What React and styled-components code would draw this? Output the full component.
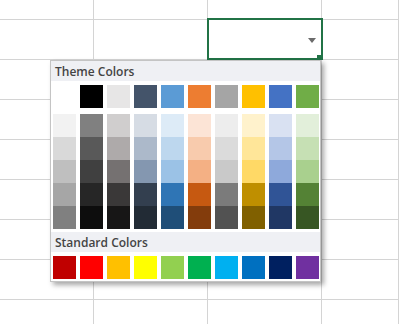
import React from "react";
import styled, { createGlobalStyle } from "styled-components";

const Global = createGlobalStyle`
  html, body { margin: 0; padding: 0; background: #ffffff; }
  body { font-family: "Open Sans", "Noto Sans", sans-serif; }
  * { box-sizing: border-box; }
`;

const Sheet = styled.div`
  position: relative;
  width: 399px;
  height: 324px;
  overflow: hidden;
`;

const Grid = styled.div`
  display: grid;
  grid-template-columns: 94px 114px 114px 1fr;
  grid-template-rows: 20px repeat(8, 40px);
`;

const Cell = styled.div`
  border-right: 1px solid #d4d4d4;
  border-bottom: 1px solid #d4d4d4;
`;

const Selection = styled.div`
  position: absolute;
  left: 207px;
  top: 18px;
  width: 116px;
  height: 42px;
  border: 2px solid #217346;
  display: flex;
  align-items: center;
  justify-content: flex-end;
  padding: 2px 5px 0 0;
`;

const FillHandle = styled.div`
  position: absolute;
  right: -1px;
  bottom: -2px;
  width: 5px;
  height: 5px;
  background: #217346;
`;

const Popup = styled.div`
  position: absolute;
  left: 50px;
  top: 60px;
  width: 271px;
  background: #ffffff;
  border: 1px solid #c4c4c4;
  box-shadow: 3px 3px 5px rgba(0, 0, 0, 0.35);
  padding-bottom: 2px;
`;

const SectionHeader = styled.div`
  height: 20px;
  background: #eff0f4;
  display: flex;
  align-items: center;
  padding-left: 4px;
  font-size: 12px;
  font-weight: 600;
  color: #444444;
  margin-top: ${(p) => p.$top || 0}px;
`;

const SwatchRow = styled.div`
  display: grid;
  grid-template-columns: repeat(10, 23px);
  column-gap: 4px;
  padding-left: 2px;
  margin-top: ${(p) => p.$top || 0}px;
`;

const Swatch = styled.div`
  width: 23px;
  height: 23px;
  background: ${(p) => p.$c};
`;

const ShadeColumn = styled.div`
  display: flex;
  flex-direction: column;
`;

const theme = ["#ffffff", "#000000", "#e7e6e6", "#44546a", "#5b9bd5", "#ed7d31", "#a5a5a5", "#ffc000", "#4472c4", "#70ad47"];

const shades = [
  ["#f2f2f2", "#d9d9d9", "#bfbfbf", "#a6a6a6", "#808080"],
  ["#808080", "#595959", "#404040", "#262626", "#0d0d0d"],
  ["#d0cece", "#aeaaaa", "#757171", "#3a3838", "#171616"],
  ["#d6dce4", "#acb9ca", "#8497b0", "#333f4f", "#222b35"],
  ["#ddebf7", "#bdd7ee", "#9bc2e6", "#2f75b5", "#1f4e78"],
  ["#fce4d6", "#f8cbad", "#f4b084", "#c65911", "#833c0c"],
  ["#ededed", "#dbdbdb", "#c9c9c9", "#7b7b7b", "#525252"],
  ["#fff2cc", "#ffe699", "#ffd966", "#bf8f00", "#806000"],
  ["#d9e1f2", "#b4c6e7", "#8ea9db", "#305496", "#203764"],
  ["#e2efda", "#c6e0b4", "#a9d08e", "#548235", "#375623"],
];

const standard = ["#c00000", "#ff0000", "#ffc000", "#ffff00", "#92d050", "#00b050", "#00b0f0", "#0070c0", "#002060", "#7030a0"];

export default function App() {
  return (
    <>
      <Global />
      <Sheet>
        <Grid>
          {Array.from({ length: 36 }).map((_, i) => (
            <Cell key={i} />
          ))}
        </Grid>
        <Selection>
          <svg width="8" height="5" viewBox="0 0 8 5">
            <polygon points="0,0 8,0 4,5" fill="#6b6b6b" />
          </svg>
          <FillHandle />
        </Selection>
        <Popup>
          <SectionHeader>Theme Colors</SectionHeader>
          <SwatchRow $top={4}>
            {theme.map((c, i) => (
              <Swatch key={i} $c={c} />
            ))}
          </SwatchRow>
          <SwatchRow $top={6}>
            {shades.map((col, i) => (
              <ShadeColumn key={i}>
                {col.map((c, j) => (
                  <Swatch key={j} $c={c} />
                ))}
              </ShadeColumn>
            ))}
          </SwatchRow>
          <SectionHeader $top={3}>Standard Colors</SectionHeader>
          <SwatchRow $top={4}>
            {standard.map((c, i) => (
              <Swatch key={i} $c={c} />
            ))}
          </SwatchRow>
        </Popup>
      </Sheet>
    </>
  );
}
